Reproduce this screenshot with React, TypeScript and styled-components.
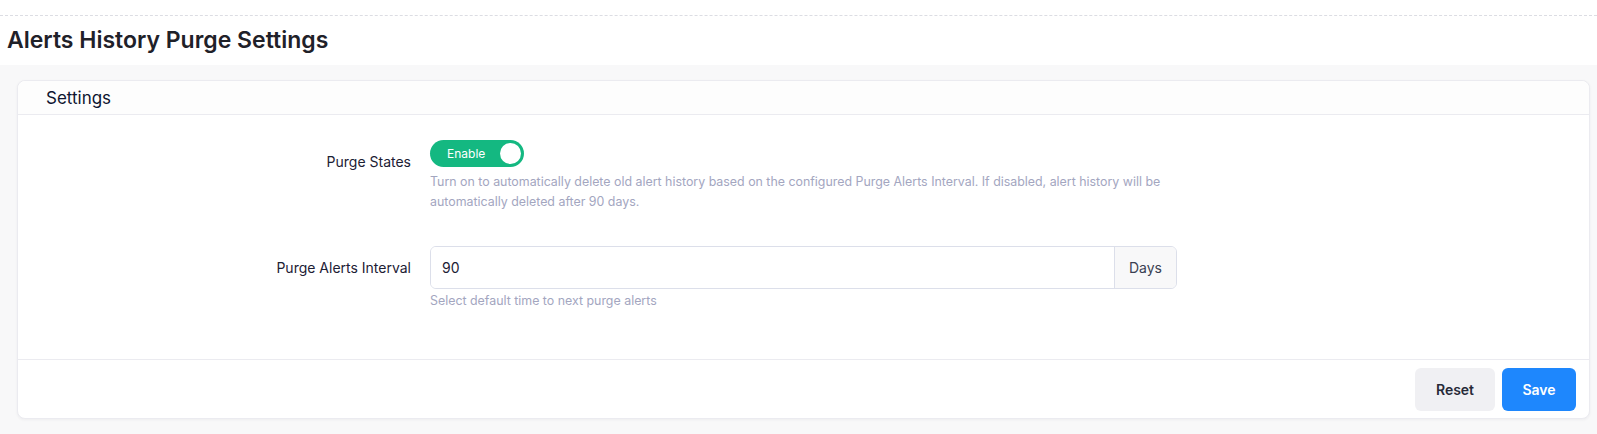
import React, { useState } from 'react';
import styled, { createGlobalStyle } from 'styled-components';

const GlobalStyle = createGlobalStyle`
  body {
    margin: 0;
    background: #ffffff;
    font-family: Inter, "Noto Sans", sans-serif;
    color: #1c2034;
  }
`

const Page = styled.div`
  width: 1597px;
  height: 434px;
  display: flex;
  flex-direction: column;
`

const TopBar = styled.div`
  height: 15px;
  border-bottom: 1px dashed #dcdde3;
`

const TitleBar = styled.div`
  height: 49px;
  padding-left: 7px;
  display: flex;
  align-items: center;
`

const Title = styled.h1`
  margin: 0 0 1px;
  font-size: 23px;
  font-weight: 600;
  color: #1f2129;
`

const Content = styled.div`
  flex: 1;
  background: #f8f8f9;
  padding: 15px 7px 0 17px;
`

const Card = styled.div`
  background: #ffffff;
  border: 1px solid #ebebf0;
  border-radius: 8px;
  box-shadow: 0 1px 3px rgba(30, 30, 60, 0.05);
`

const CardHeader = styled.div`
  height: 33px;
  padding-left: 28px;
  display: flex;
  align-items: center;
  background: #fdfdfd;
  border-bottom: 1px solid #ebebf0;
  border-radius: 8px 8px 0 0;
  font-size: 17px;
  color: #0e1530;
`

const CardBody = styled.div`
  padding: 25px 0 48px;
  display: flex;
  flex-direction: column;
  gap: 35px;
`

const FormRow = styled.div`
  display: flex;
  gap: 19px;
`

const Label = styled.label`
  width: 393px;
  text-align: right;
  font-size: 14px;
  line-height: 20px;
  padding-top: 12px;
  color: #1c2034;
`

const Control = styled.div`
  width: 747px;
  display: flex;
  flex-direction: column;
  align-items: flex-start;
`

const Toggle = styled.button<{ on: boolean }>`
  width: 94px;
  height: 27px;
  border: none;
  border-radius: 14px;
  background: ${({ on }) => (on ? '#14b881' : '#c4c6d4')};
  padding: 0 3px 0 17px;
  display: flex;
  align-items: center;
  justify-content: space-between;
  cursor: pointer;
  font-family: inherit;
  font-size: 12px;
  color: #ffffff;
`

const Knob = styled.span`
  width: 21px;
  height: 21px;
  border-radius: 50%;
  background: #ffffff;
`

const Help = styled.div<{ gap?: number }>`
  margin-top: ${({ gap }) => gap ?? 5}px;
  font-size: 12.4px;
  line-height: 19.5px;
  color: #a3a6bf;
`

const InputGroup = styled.div`
  width: 100%;
  height: 43px;
  box-sizing: border-box;
  border: 1px solid #dcdfea;
  border-radius: 6px;
  display: flex;
  overflow: hidden;
`

const Input = styled.input`
  flex: 1;
  border: none;
  outline: none;
  padding: 0 11px;
  font-family: inherit;
  font-size: 14px;
  color: #1c2034;
`

const Addon = styled.span`
  width: 61px;
  border-left: 1px solid #dcdfea;
  background: #f8f8f9;
  display: flex;
  align-items: center;
  justify-content: center;
  font-size: 14px;
  color: #3a3f52;
`

const CardFooter = styled.div`
  border-top: 1px solid #ebebf0;
  padding: 8px 13px 7px;
  display: flex;
  justify-content: flex-end;
  gap: 7px;
`

const Button = styled.button<{ primary?: boolean }>`
  height: 43px;
  padding: 0 20px;
  border: none;
  border-radius: 6px;
  font-family: inherit;
  font-size: 14px;
  font-weight: 600;
  cursor: pointer;
  background: ${({ primary }) => (primary ? '#1e87fd' : '#f0f0f3')};
  color: ${({ primary }) => (primary ? '#ffffff' : '#262a38')};
  min-width: ${({ primary }) => (primary ? '74px' : '80px')};
`

const App: React.FC = () => {
  const [enabled, setEnabled] = useState(true);
  const [interval, setInterval] = useState('90');

  return (
    <>
      <GlobalStyle />
      <Page>
        <TopBar />
        <TitleBar>
          <Title>Alerts History Purge Settings</Title>
        </TitleBar>
        <Content>
          <Card>
            <CardHeader>Settings</CardHeader>
            <CardBody>
              <FormRow>
                <Label>Purge States</Label>
                <Control>
                  <Toggle on={enabled} onClick={() => setEnabled(!enabled)}>
                    Enable
                    <Knob />
                  </Toggle>
                  <Help>
                    Turn on to automatically delete old alert history based on the configured Purge Alerts Interval. If disabled, alert history will be automatically deleted after 90 days.
                  </Help>
                </Control>
              </FormRow>
              <FormRow>
                <Label>Purge Alerts Interval</Label>
                <Control>
                  <InputGroup>
                    <Input value={interval} onChange={e => setInterval(e.target.value)} />
                    <Addon>Days</Addon>
                  </InputGroup>
                  <Help gap={2}>Select default time to next purge alerts</Help>
                </Control>
              </FormRow>
            </CardBody>
            <CardFooter>
              <Button>Reset</Button>
              <Button primary>Save</Button>
            </CardFooter>
          </Card>
        </Content>
      </Page>
    </>
  );
};

export default App;
